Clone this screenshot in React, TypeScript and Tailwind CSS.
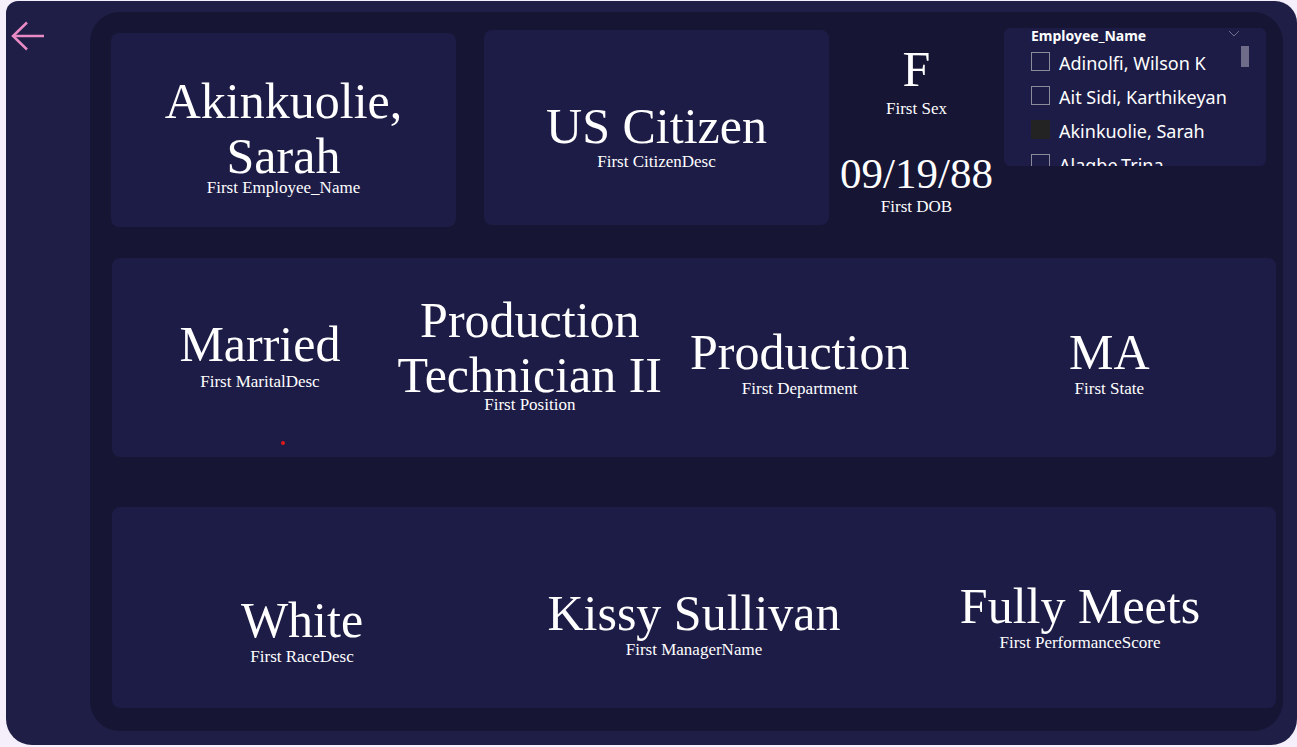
import React from 'react'

const names = ['Adinolfi, Wilson K', 'Ait Sidi, Karthikeyan', 'Akinkuolie, Sarah', 'Alagbe,Trina']

const Stat = ({ value, label, labelGap = '' }: { value: React.ReactNode; label: string; labelGap?: string }) => (
  <div className="flex flex-col items-center text-center text-white">
    <div className="text-[50px] leading-[55px] whitespace-nowrap">{value}</div>
    <div className={`text-[17px] leading-[20px] whitespace-nowrap ${labelGap}`}>{label}</div>
  </div>
)

const App = () => {
  return (
    <div className="w-[1297px] h-[747px] bg-[#f4effa] overflow-hidden font-['Liberation_Serif',serif]">
      <div className="ml-[6px] mt-[1px] h-[744px] w-[1291px] rounded-tl-[12px] rounded-tr-[22px] rounded-b-[26px] bg-[#1f1e46] flex">
        {/* back button */}
        <div className="w-[84px] pl-[4px] pt-[20px]">
          <svg width="34" height="32" viewBox="0 0 34 32" fill="none" stroke="#e88bc4" strokeWidth="2.5">
            <path d="M3 15 H35" />
            <path d="M17 1.5 L3 15 L17 28.5" />
          </svg>
        </div>

        <div className="mt-[11px] w-[1193px] h-[719px] rounded-[30px] bg-[#161533] flex flex-col">
          {/* top row */}
          <div className="h-[215px] flex items-start pl-[21px]">
            <div className="mt-[21px] w-[345px] h-[194px] rounded-[8px] bg-[#1d1c46] flex items-center justify-center pt-[12px]">
              <Stat value={<>Akinkuolie,<br />Sarah</>} label="First Employee_Name" labelGap="-mt-[6px]" />
            </div>
            <div className="ml-[28px] mt-[18px] w-[345px] h-[195px] rounded-[8px] bg-[#1d1c46] flex items-center justify-center pt-[16px]">
              <Stat value="US Citizen" label="First CitizenDesc" labelGap="-mt-[2px]" />
            </div>
            <div className="w-[175px] mt-[33px] flex flex-col items-center text-white">
              <div className="text-[50px] leading-[48px]">F</div>
              <div className="mt-[6px] text-[17px] leading-[20px]">First Sex</div>
              <div className="mt-[34px] text-[43px] leading-[42px]">09/19/88</div>
              <div className="mt-[2px] text-[17px] leading-[20px]">First DOB</div>
            </div>
            <div className="relative mt-[16px] w-[262px] h-[138px] rounded-[6px] bg-[#1d1c46] font-['Noto_Sans',sans-serif] text-white">
              <div className="pl-[27px] -mt-[2px] text-[14px] font-bold leading-[19px]">Employee_Name</div>
              <svg className="absolute left-[224px] top-[2px]" width="12" height="7" viewBox="0 0 12 7" fill="none" stroke="#6f6d8c" strokeWidth="1">
                <path d="M1 1 L6 6 L11 1" />
              </svg>
              <div className="absolute left-[237px] top-[18px] w-[8px] h-[21px] bg-[#6e6c89]" />
              <div className="mt-[7px] h-[114px] overflow-hidden flex flex-col gap-[15px] pl-[27px]">
                {names.map((n, i) => (
                  <div key={n} className="flex items-center gap-[9px] h-[19px] shrink-0">
                    <div className={`w-[19px] h-[19px] shrink-0 ${i === 2 ? 'bg-[#232323]' : 'border border-[#8c8b9c]'}`} />
                    <span className="text-[18px] leading-[19px] mt-[3px] whitespace-nowrap">{n}</span>
                  </div>
                ))}
              </div>
            </div>
          </div>

          {/* second row */}
          <div className="relative mt-[31px] ml-[22px] w-[1164px] h-[199px] rounded-[8px] bg-[#1d1c46] flex items-center pl-[13px] pb-[7px]">
            <div className="w-[272px] flex justify-center">
              <Stat value="Married" label="First MaritalDesc" />
            </div>
            <div className="w-[272px] flex justify-center">
              <Stat value={<>Production<br />Technician II</>} label="First Position" labelGap="-mt-[8px]" />
            </div>
            <div className="w-[272px] flex justify-center pt-[16px]">
              <Stat value="Production" label="First Department" labelGap="-mt-[1px]" />
            </div>
            <div className="w-[344px] flex justify-center pt-[16px] pl-[8px]">
              <Stat value="MA" label="First State" labelGap="-mt-[1px]" />
            </div>
            <div className="absolute left-[169px] top-[183px] w-[4px] h-[4px] rounded-full bg-[#e01919]" />
          </div>

          {/* third row */}
          <div className="mt-[50px] ml-[22px] w-[1164px] h-[201px] rounded-[8px] bg-[#1d1c46] grid grid-cols-3 items-start">
            <div className="flex justify-center pt-[86px] pr-[8px]">
              <Stat value="White" label="First RaceDesc" labelGap="-mt-[1px]" />
            </div>
            <div className="flex justify-center pt-[79px]">
              <Stat value="Kissy Sullivan" label="First ManagerName" labelGap="-mt-[1px]" />
            </div>
            <div className="flex justify-center pt-[72px] pr-[4px]">
              <Stat value="Fully Meets" label="First PerformanceScore" labelGap="-mt-[1px]" />
            </div>
          </div>
        </div>
      </div>
    </div>
  )
}

export default App
